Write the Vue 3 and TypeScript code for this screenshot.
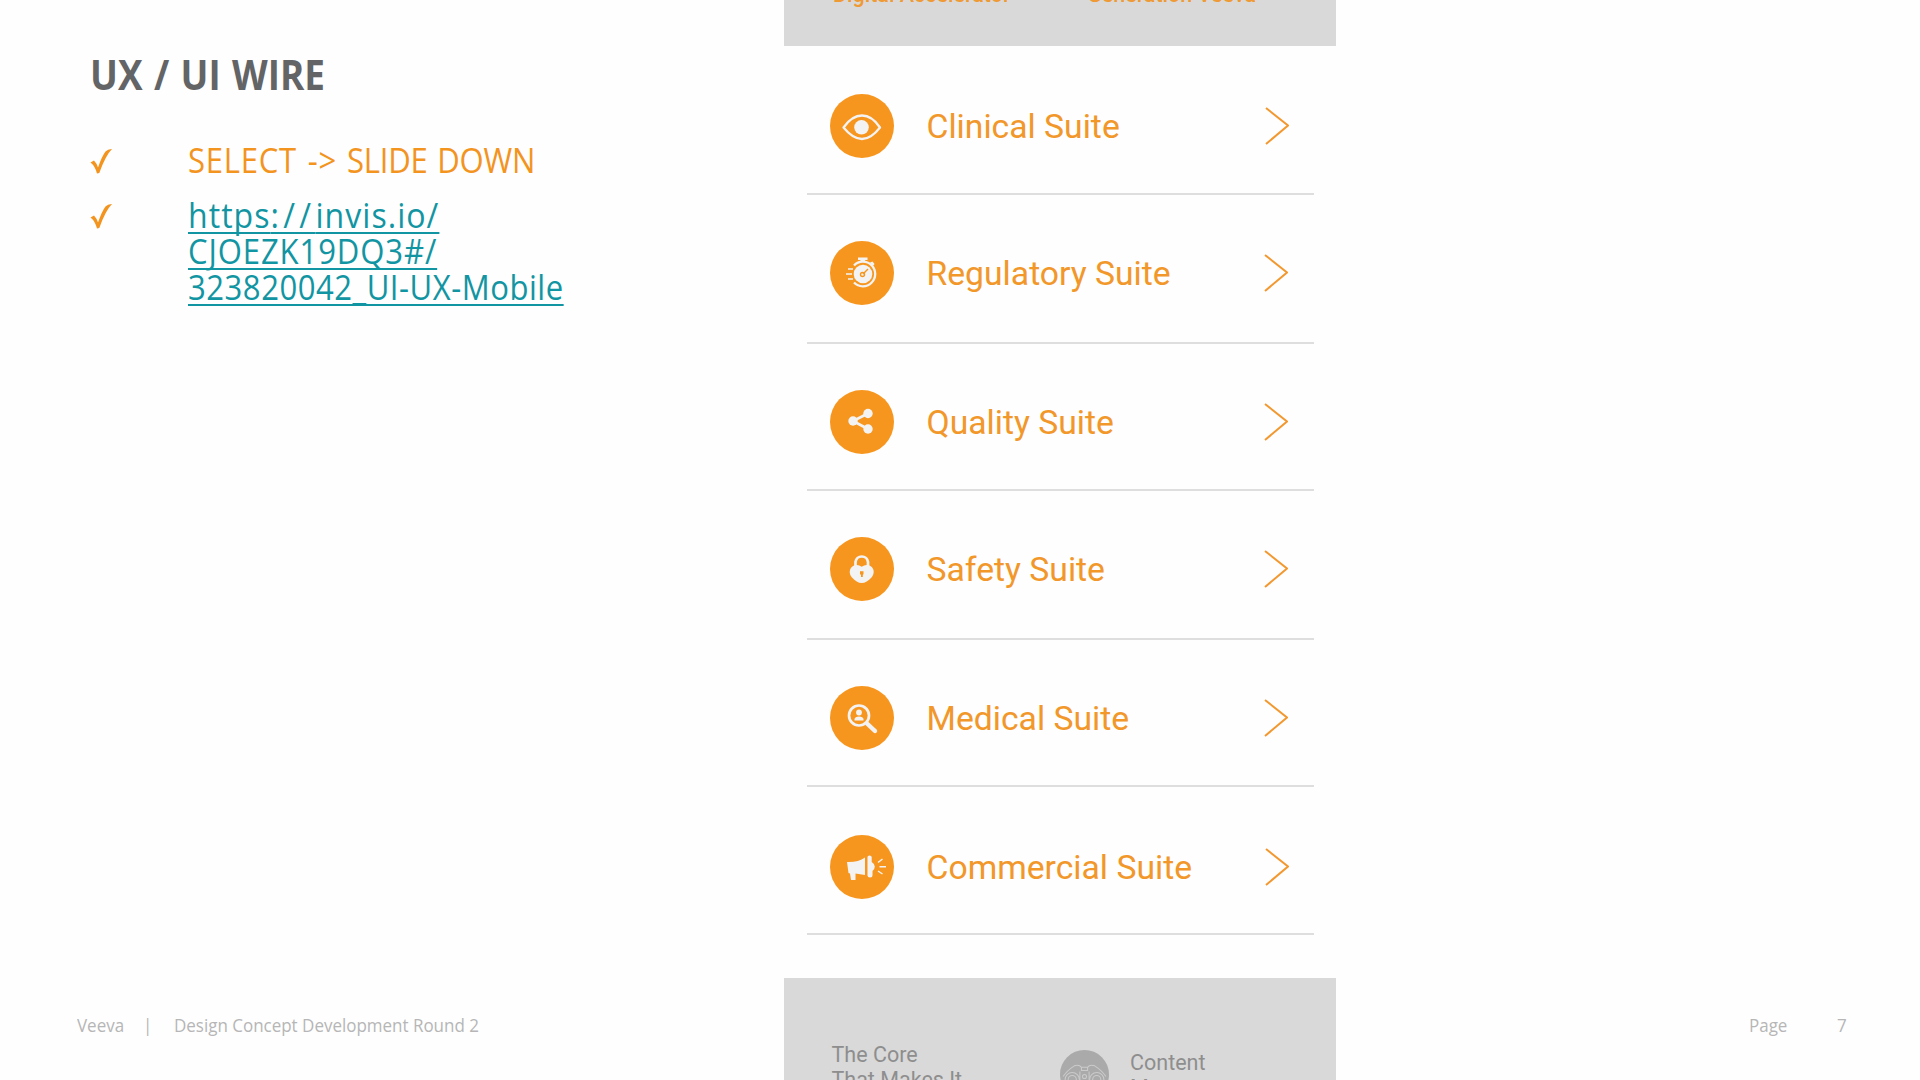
<script setup lang="ts">
interface Suite {
    name: string
    icon: 'eye' | 'timer' | 'share' | 'lock' | 'search' | 'horn'
    wide?: boolean
}

const suites: Suite[] = [
    { name: 'Clinical Suite', icon: 'eye', wide: true },
    { name: 'Regulatory Suite', icon: 'timer' },
    { name: 'Quality Suite', icon: 'share' },
    { name: 'Safety Suite', icon: 'lock' },
    { name: 'Medical Suite', icon: 'search' },
    { name: 'Commercial Suite', icon: 'horn', wide: true },
]
</script>

<template>
    <div class="slide">
        <section class="notes">
            <h1 class="title"><span class="title-text">UX / UI WIRE</span></h1>
            <ul class="list">
                <li class="item">
                    <svg class="check" viewBox="0 0 22 26"><path d="M.5 14.5 4 12.5Q6.500 15 8 19.500 12 8 15.500 3.500 18 .8 22 1 15.500 7.500 9.300 25L7 25.500Q5 18 .5 14.500Z" /></svg>
                    <span class="item-text"><span class="loose">SELECT -&gt;</span> SLIDE DOWN</span>
                </li>
                <li class="item">
                    <svg class="check" viewBox="0 0 22 26"><path d="M.5 14.5 4 12.5Q6.500 15 8 19.500 12 8 15.500 3.500 18 .8 22 1 15.500 7.500 9.300 25L7 25.500Q5 18 .5 14.500Z" /></svg>
                    <a class="link">
                        <span class="link-line link-host">https<span class="slashes">://</span>invis.io/</span>
                        <span class="link-line link-id">CJOEZK19DQ3#/</span>
                        <span class="link-line link-page">323820042_UI-UX-Mobile</span>
                    </a>
                </li>
            </ul>
            <footer class="footer">
                <span class="foot-brand">Veeva</span>
                <span class="foot-bar">|</span>
                <span class="foot-name">Design Concept Development Round 2</span>
            </footer>
        </section>

        <section class="phone">
            <div class="top-band">
                <span class="top-left">Digital Accelerator</span>
                <span class="top-right">Generation Veeva</span>
            </div>
            <div class="suites">
                <div v-for="s in suites" :key="s.name" class="row">
                    <svg class="icon" viewBox="0 0 64 64">
                        <circle class="disc" cx="32" cy="32" r="32" />
                        <g v-if="s.icon === 'eye'">
                            <path class="line" d="M13.500 33.500Q22 21.500 32 21.500T50 33.500Q41 45 32 45T13.500 33.500Z" />
                            <circle class="solid" cx="31.500" cy="33.300" r="7.300" />
                        </g>
                        <g v-else-if="s.icon === 'timer'">
                            <path class="solid" d="M28 16.500H37.500V19H35V21H30.500V19H28ZM40 21.500 42.500 20.500 44.500 23 43 25Z" />
                            <path class="line" d="M24 24.500A12.300 12.300 0 1 1 24 41.500" />
                            <circle class="solid" cx="33" cy="33" r="9.300" />
                            <path class="line dash" d="M18 28H23M16 33H22M18 38H23" />
                            <path class="cut" d="M33 33 38 28" />
                            <circle class="cut" cx="32.500" cy="33.500" r="2" />
                        </g>
                        <g v-else-if="s.icon === 'share'">
                            <path class="line link-bars" d="M38 23.500 23 31 38 39" />
                            <circle class="solid" cx="38" cy="23.500" r="4.700" />
                            <circle class="solid" cx="23" cy="31" r="4.700" />
                            <circle class="solid" cx="38" cy="39" r="4.700" />
                        </g>
                        <g v-else-if="s.icon === 'lock'">
                            <path class="line shackle" d="M25.500 29V25A6.300 6.300 0 0 1 38 25V30" />
                            <path class="solid" d="M31.700 29.800Q35.500 27 39.500 28.500C44.500 31 45 36.500 41.500 40.500 38.500 44 35 46 31.700 46S25 44 22 40.500C18.500 36.500 19 31 24 28.500Q28 27 31.700 29.800Z" />
                            <path class="hole" d="M30 34.300H33.500V37L32.800 38V40H31V38L30 37Z" />
                        </g>
                        <g v-else-if="s.icon === 'search'">
                            <circle class="line lens" cx="29" cy="29.500" r="10" />
                            <path class="line handle" d="M37 37.500 45 45" />
                            <circle class="solid" cx="29" cy="26.500" r="2.900" />
                            <path class="solid" d="M24.500 34.500V33Q25 30.500 29 30.500T33.500 33V34.500Z" />
                        </g>
                        <g v-else>
                            <path class="solid" d="M17 27Q28 27.500 35 22.500V40L25.500 38.500V45H21L20 38.500 18.500 38Z" />
                            <path class="solid" d="M37.500 22Q37.500 20.500 39.500 20.500T41.700 22V27Q44.800 29 44.800 31.500T42.500 36V40Q42.500 42.500 40 42.500T37.500 40.500Z" />
                            <path class="line rays" d="M48 27.500 52.500 24M49.500 31.700H56M48 36 52.500 39" />
                        </g>
                    </svg>
                    <span class="name">{{ s.name }}</span>
                    <svg class="chevron" :class="{ 'chevron-wide': s.wide }" viewBox="0 0 24 38"><path d="M1 1 23 18.500 1 37" /></svg>
                </div>
            </div>
            <div class="bottom-band">
                <div class="core"><span>The Core</span><span>That Makes It</span></div>
                <svg class="badge" viewBox="0 0 48 48">
                    <circle class="badge-disc" cx="24" cy="24" r="24" />
                    <path class="badge-line" d="M3 26Q7 20 14 15.500Q19 14 21 17H27Q29 14 34 15.500Q41 20 45 26M21 17V20H27V17M19.500 21V31M28.500 21V31" />
                    <circle class="badge-line" cx="12" cy="29" r="7" />
                    <circle class="badge-line" cx="12" cy="29" r="4" />
                    <circle class="badge-line" cx="36" cy="29" r="7" />
                    <circle class="badge-line" cx="36" cy="29" r="4" />
                    <circle class="badge-line" cx="24" cy="26" r="2" />
                </svg>
                <div class="content"><span>Content</span><span>Management</span></div>
            </div>
        </section>

        <section class="side">
            <footer class="page"><span class="page-label">Page</span><span>7</span></footer>
        </section>
    </div>
</template>

<style>
body { background: #fefefe; }
</style>

<style scoped>
.slide {
    display: grid;
    grid-template-columns: 784px 552px 584px;
    height: 1080px;
    overflow: hidden;
    font-family: "Open Sans", sans-serif;
}
.slide span { white-space: nowrap; }

.notes { display: flex; flex-direction: column; padding: 49px 0 43px; }
.title { margin: 0 0 43px 90px; font-size: 41px; line-height: 50px; font-weight: 700; color: #636466; }
.title-text { display: inline-block; word-spacing: 2px; transform: scaleX(0.9); transform-origin: left; }
.list { display: grid; gap: 18.5px; margin: 0 0 0 90px; padding: 0; list-style: none; color: #f3941e; }
.item { display: flex; align-items: flex-start; font-size: 34.5px; line-height: 36px; }
.check { width: 22px; height: 26px; margin: 6px 76px 0 0; fill: #f3941e; }
.item-text, .link-line { display: block; transform-origin: left; }
.item-text { letter-spacing: -0.25px; word-spacing: 2.2px; transform: scaleX(0.9); }
.loose { letter-spacing: 0.85px; }
.link { width: 400px; color: #1295a2; }
.link-line {
    width: max-content;
    text-decoration: underline;
    text-decoration-thickness: 1.6px;
    text-underline-offset: 4px;
    text-decoration-skip-ink: none;
}
.link-host { letter-spacing: 1.1px; transform: scaleX(0.93); }
.slashes { letter-spacing: 4.6px; }
.link-id { letter-spacing: 1px; transform: scaleX(0.9); }
.link-page { letter-spacing: 0.59px; transform: scaleX(0.9); }

.footer, .page { display: flex; margin-top: auto; font-size: 18px; line-height: 24px; color: #b6b6b6; }
.footer { padding-left: 77px; }
.footer span, .page span { transform: scaleX(0.943); transform-origin: left; }
.foot-brand { width: 66px; }
.foot-bar { width: 31px; }

.phone { display: flex; flex-direction: column; font-family: Roboto, sans-serif; }
.top-band { display: flex; height: 46px; background: #d9d9d9; font-size: 21.5px; line-height: 24px; font-weight: 500; color: #ef9a35; }
.top-band span { margin-top: -17px; }
.top-left { width: 254px; padding-left: 49px; }
.suites { flex: 1; padding: 1px 22px 0 23px; background: #fefefe; }
.row {
    display: flex;
    align-items: center;
    box-sizing: border-box;
    height: 147px;
    padding: 11px 0 0 23px;
    border-bottom: 2px solid #dedede;
}
.row:first-child { height: 148px; }
.row:nth-child(even) { height: 149px; padding-top: 9px; }
.row:last-child { height: 148px; padding-top: 13px; }
.icon { width: 64px; height: 64px; }
.disc { fill: #f7961e; }
.solid { fill: #f3f3f3; }
.line { fill: none; stroke: #f3f3f3; stroke-width: 2.3; stroke-linejoin: round; }
.dash { stroke-width: 1.7; }
.cut { fill: none; stroke: #f7961e; stroke-width: 1.4; }
.link-bars { stroke-width: 2.6; }
.shackle { stroke-width: 2.7; }
.hole { fill: #f7961e; }
.lens { stroke-width: 2.7; }
.handle { stroke-width: 4.4; stroke-linecap: round; }
.rays { stroke-width: 1.5; }
.name { flex: 1; margin-left: 32.5px; padding-top: 2px; font-size: 33.7px; line-height: 40px; color: #f2972a; }
.chevron { width: 24px; height: 38px; margin-right: 26.5px; fill: none; stroke: #f3982f; stroke-width: 2; }
.chevron-wide { margin-right: 25.5px; }

.bottom-band { display: flex; height: 102px; box-sizing: border-box; padding: 0 0 0 47.5px; background: #d9d9d9; color: #8e8e8e; font-size: 21.5px; line-height: 25px; }
.core, .content { display: flex; flex-direction: column; }
.core { width: 228.5px; padding-top: 64px; }
.badge { flex: none; width: 49px; height: 49px; margin-top: 72px; }
.badge-disc { fill: #aaa; }
.badge-line { fill: none; stroke: #cbcbcb; stroke-width: 1; }
.content { padding: 72px 0 0 21px; }

.side { display: flex; padding: 0 73px 43px; }
.page { margin: auto 0 0 auto; }
.page-label { width: 88px; }
</style>
